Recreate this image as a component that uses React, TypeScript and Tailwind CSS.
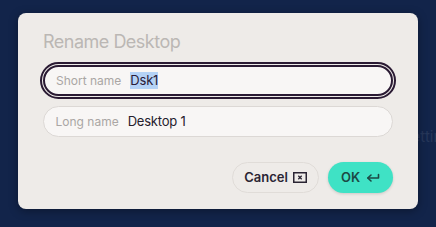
export default function App() {
  return (
    <div className="relative w-[436px] h-[227px] overflow-hidden bg-[#12244a] font-['Inter',sans-serif]">
      {/* page behind the dialog */}
      <span className="absolute left-[402px] top-[126px] text-[15px] text-[#26375a]">Settings</span>

      <div className="relative ml-[18px] mt-[13px] w-[400px] h-[196px] rounded-[8px] bg-[#eeebe8] shadow-[0_2px_10px_rgba(0,0,0,0.35)] px-[25px] pt-[17px]">
        <h1 className="text-[18px] leading-[24px] text-[#bbb7b4] tracking-[-0.5px]">Rename Desktop</h1>

        <div className="mt-[11px] flex flex-col gap-[10px]">
          <div className="flex items-center h-[31px] rounded-full bg-[#f8f6f5] border-2 border-[#2a1a33] outline-2 outline-offset-[1.5px] outline-[#2a1a33] px-[11px]">
            <span className="text-[12px] text-[#aaa6a4]">Short name</span>
            <span className="ml-[9px] text-[13px] bg-[#b4d2f6] text-[#2a1c38] leading-[17px] tracking-[-0.2px]">Dsk1</span>
          </div>
          <div className="flex items-center h-[31px] rounded-full bg-[#f8f6f5] border-[1.5px] border-[#dcd8d5] px-[11.5px]">
            <span className="text-[12px] text-[#aaa6a4]">Long name</span>
            <span className="ml-[9px] text-[13px] text-[#26202c] tracking-[-0.2px]">Desktop 1</span>
          </div>
        </div>

        <div className="mt-[25px] flex justify-end gap-[9px]">
          <button className="flex items-center gap-[5px] h-[31px] w-[87px] justify-center rounded-full border-[1.5px] border-[#e0dcd8] bg-[#eeebe8] text-[13px] font-semibold text-[#2a2433]">
            Cancel
            <svg width="14" height="11" viewBox="0 0 14 11" fill="none" stroke="#2a2433">
              <rect x="0.75" y="0.75" width="12.5" height="9.5" strokeWidth="1.5" />
              <path d="M5.3 3.8l3.4 3.4M8.7 3.8l-3.4 3.4" strokeWidth="1.3" />
            </svg>
          </button>
          <button className="flex items-center gap-[6px] h-[31px] w-[65px] justify-center rounded-full bg-[#3fe2c5] shadow-[0_1px_3px_rgba(0,0,0,0.15)] text-[13px] font-semibold text-[#1c4a45]">
            OK
            <svg width="14" height="10" viewBox="0 0 14 10" fill="none" stroke="#1c4a45" strokeWidth="1.6" strokeLinecap="round" strokeLinejoin="round">
              <path d="M12.5 1.5v3.5H2" />
              <path d="M5 2L1.8 5 5 8" />
            </svg>
          </button>
        </div>
      </div>
    </div>
  )
}
